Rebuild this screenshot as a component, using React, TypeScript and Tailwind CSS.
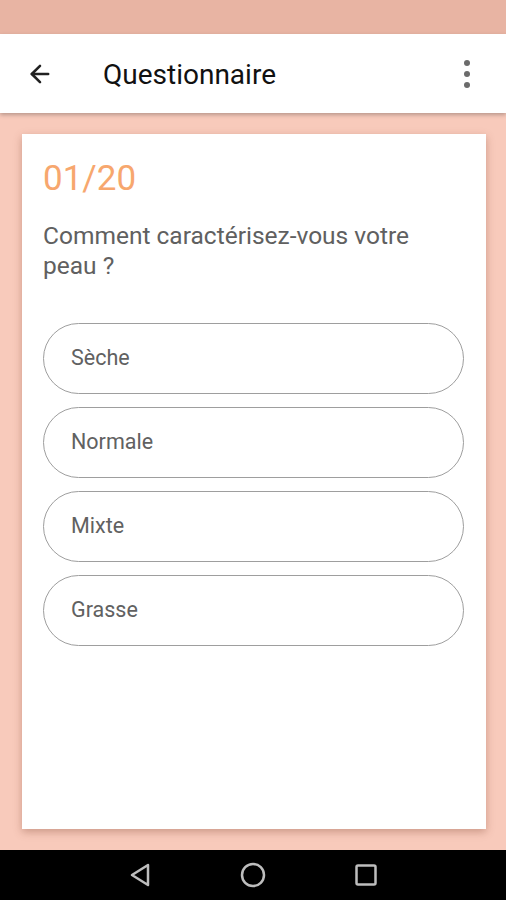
import { ArrowLeft } from "lucide-react";

const options = ["Sèche", "Normale", "Mixte", "Grasse"];

export default function App() {
    return (
        <div className="w-[506px] h-[900px] flex flex-col bg-[#f8cabb]" style={{ fontFamily: "Roboto, 'Noto Sans', sans-serif" }}>
            <div className="h-[34px] bg-[#e8b4a3]" />
            <div className="h-[79px] bg-white flex items-center pl-[26px] pr-[36px] shadow-[0_2px_4px_rgba(0,0,0,0.25)] relative z-10">
                <ArrowLeft className="w-[28px] h-[28px] text-[#212121]" strokeWidth={2.2} />
                <p className="ml-[49px] pt-[3px] text-[28px] text-[#111111] font-normal flex-1">Questionnaire</p>
                <div className="flex flex-col gap-[5px]">
                    <span className="w-[6px] h-[6px] rounded-full bg-[#6b6b6b]" />
                    <span className="w-[6px] h-[6px] rounded-full bg-[#6b6b6b]" />
                    <span className="w-[6px] h-[6px] rounded-full bg-[#6b6b6b]" />
                </div>
            </div>
            <div className="flex-1 pl-[22px] pr-[20px] pt-[21px] pb-[21px] flex">
                <div className="flex-1 bg-white shadow-[0_3px_8px_rgba(120,60,40,0.35)] pl-[21px] pr-[22px] pt-[25px]">
                    <p className="text-[35px] leading-[40px] text-[#f7a76e]">01/20</p>
                    <p className="mt-[22px] text-[24.5px] leading-[30px] text-[#606060] pr-[20px]">Comment caractérisez-vous votre peau ?</p>
                    <div className="mt-[42px] flex flex-col gap-[13px]">
                        {options.map((o) => (
                            <div key={o} className="h-[71px] rounded-full border border-[#9e9e9e] flex items-center px-[27px]">
                                <span className="text-[21.5px] text-[#616161]">{o}</span>
                            </div>
                        ))}
                    </div>
                </div>
            </div>
            <div className="h-[50px] bg-black flex items-center justify-center gap-[88px]">
                <svg width="24" height="26" viewBox="0 0 24 26" fill="none" stroke="#bdbdbd" strokeWidth="2.5" strokeLinejoin="round">
                    <path d="M20 3 L4 13 L20 23 Z" />
                </svg>
                <svg width="26" height="26" viewBox="0 0 26 26" fill="none" stroke="#bdbdbd" strokeWidth="2.5">
                    <circle cx="13" cy="13" r="11" />
                </svg>
                <svg width="24" height="24" viewBox="0 0 24 24" fill="none" stroke="#bdbdbd" strokeWidth="2.5">
                    <rect x="2.5" y="2.5" width="19" height="19" rx="1.5" />
                </svg>
            </div>
        </div>
    );
}
